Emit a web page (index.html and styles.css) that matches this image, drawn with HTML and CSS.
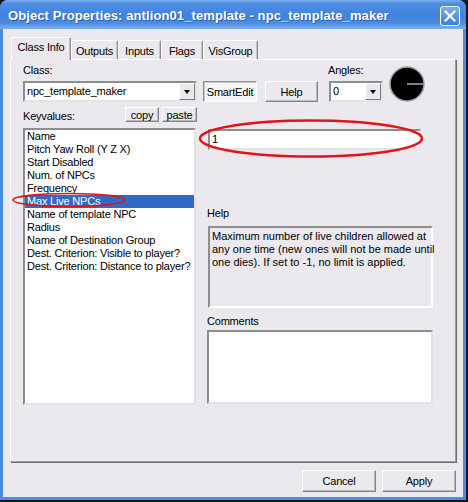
FILE: index.html
```html
<!DOCTYPE html>
<html lang="en">
<head>
    <meta charset="UTF-8">
    <title>Object Properties</title>
    <link rel="stylesheet" href="styles.css">
</head>
<body>
    <div class="window">
        <div class="titlebar">
            <span class="title">Object Properties: antlion01_template - npc_template_maker</span>
            <button class="close" type="button">
                <svg width="12" height="12" viewBox="0 0 12 12"><path d="M1.5 1.5 L10.5 10.5 M10.5 1.5 L1.5 10.5" stroke="#fff" stroke-width="2.2" stroke-linecap="square"/></svg>
            </button>
        </div>
        <div class="frame">
            <div class="tabs">
                <div class="tab active tab-class">Class Info</div>
                <div class="tab tab-outputs">Outputs</div>
                <div class="tab tab-inputs">Inputs</div>
                <div class="tab tab-flags">Flags</div>
                <div class="tab tab-vis">VisGroup</div>
            </div>
            <div class="panel">
                <div class="toprow">
                    <div class="field class-field">
                        <label>Class:</label>
                        <div class="combo"><span class="combo-text">npc_template_maker</span><span class="drop"></span></div>
                    </div>
                    <button class="btn smartedit" type="button">SmartEdit</button>
                    <button class="btn help-btn" type="button">Help</button>
                    <div class="field angles-field">
                        <label>Angles:</label>
                        <div class="combo"><span class="combo-text">0</span><span class="drop"></span></div>
                    </div>
                    <svg class="dial" width="36" height="36" viewBox="0 0 36 36">
                        <circle cx="18" cy="18" r="17" fill="#000" stroke="#a4a4a4" stroke-width="1.5"/>
                        <line x1="18" y1="18" x2="34" y2="18" stroke="#fff" stroke-width="1"/>
                    </svg>
                </div>

                <div class="kvrow">
                    <label>Keyvalues:</label>
                    <button class="btn small copy" type="button">copy</button>
                    <button class="btn small paste" type="button">paste</button>
                </div>

                <div class="main">
                    <ul class="keylist">
                        <li>Name</li>
                        <li>Pitch Yaw Roll (Y Z X)</li>
                        <li>Start Disabled</li>
                        <li>Num. of NPCs</li>
                        <li>Frequency</li>
                        <li class="selected">Max Live NPCs</li>
                        <li>Name of template NPC</li>
                        <li>Radius</li>
                        <li>Name of Destination Group</li>
                        <li>Dest. Criterion: Visible to player?</li>
                        <li>Dest. Criterion: Distance to player?</li>
                    </ul>
                    <div class="side">
                        <div class="value">1</div>
                        <div class="caption help-caption">Help</div>
                        <div class="helpbox">Maximum number of live children allowed at<br>any one time (new ones will not be made until<br>one dies). If set to -1, no limit is applied.</div>
                        <div class="caption comments-caption">Comments</div>
                        <div class="comments"></div>
                    </div>
                </div>
            </div>
            <div class="footer">
                <button class="btn wide" type="button">Cancel</button>
                <button class="btn wide" type="button">Apply</button>
            </div>
        </div>

        <!-- red markup rings drawn over the dialog -->
        <svg class="marks" width="466" height="500" viewBox="0 0 466 500">
            <ellipse cx="311" cy="138.5" rx="111" ry="18" fill="none" stroke="#e3121b" stroke-width="2.4"/>
            <ellipse cx="69" cy="200" rx="56" ry="6.5" fill="none" stroke="#e3121b" stroke-width="1.6"/>
        </svg>
    </div>
</body>
</html>
```

FILE: styles.css
```css
body {
    margin: 0;
    background: #10151f;
    font-family: "Liberation Sans", Arial, sans-serif;
    font-size: 11px;
    letter-spacing: -0.2px;
    color: #000;
}
button {
    font: inherit;
    letter-spacing: inherit;
    color: #000;
    padding: 0;
}
.window {
    position: relative;
    width: 466px;
    height: 500px;
    background: #4a8ce2;
    border-radius: 8px 8px 0 0;
    overflow: hidden;
}
.titlebar {
    height: 29px;
    display: flex;
    align-items: center;
    justify-content: space-between;
    padding: 0 6px 0 8px;
    background: linear-gradient(#7cb0ef 0%, #4d8ee2 12%, #3f83dc 55%, #4c8de1 80%, #7fb1ee 100%);
    box-sizing: border-box;
}
.title {
    color: #fff;
    font-weight: bold;
    font-size: 13px;
    letter-spacing: 0.1px;
    margin-top: 2px;
    text-shadow: 1px 1px 0 #2a5fb0;
}
.close {
    width: 20px;
    height: 20px;
    margin-top: 3px;
    border: 1px solid #fff;
    border-radius: 3px;
    background: linear-gradient(#79aef0, #3d7fdc);
    display: flex;
    align-items: center;
    justify-content: center;
}
.frame {
    margin: 0 3px;
    height: 468px;
    background: #ebe9ed;
    padding: 8px 0 0 7px;
    box-sizing: border-box;
}

/* tab strip */
.tabs {
    display: flex;
    align-items: flex-end;
    height: 22px;
    margin-left: 1px;
    position: relative;
    z-index: 1;
}
.tab {
    height: 19px;
    box-sizing: border-box;
    border: 1px solid #fff;
    border-right-color: #8a8a8a;
    border-bottom: none;
    border-radius: 2px 2px 0 0;
    box-shadow: inset -1px 0 #c4c4c4;
    text-align: center;
    line-height: 18px;
    padding-top: 1px;
}
.tab.active {
    height: 23px;
    margin-bottom: -1px;
    background: #ebe9ed;
    line-height: 19px;
    padding-top: 0;
}
.tab-class { width: 60px; }
.tab-outputs { width: 47px; }
.tab-inputs { width: 43px; }
.tab-flags { width: 42px; }
.tab-vis { width: 55px; }

.panel {
    width: 446px;
    height: 403px;
    box-sizing: border-box;
    border: 1px solid #fff;
    border-right-color: #9c9c9c;
    border-bottom-color: #9c9c9c;
    box-shadow: 1px 1px 0 #6f6f6f;
    padding: 4px 0 0 12px;
}
label, .caption {
    display: block;
    line-height: 13px;
}

/* class / angles row */
.toprow {
    display: flex;
    align-items: flex-end;
}
.combo {
    display: flex;
    height: 21px;
    box-sizing: border-box;
    background: #fff;
    border: 2px solid;
    border-color: #8e8e8e #e4e4e4 #e4e4e4 #8e8e8e;
    margin-top: 4px;
}
.combo-text {
    flex: 1;
    padding-left: 2px;
    line-height: 17px;
}
.drop {
    width: 16px;
    background: #ebe9ed;
    border: 1px solid;
    border-color: #fff #7c7c7c #7c7c7c #fff;
    box-sizing: border-box;
    position: relative;
}
.drop::after {
    content: "";
    position: absolute;
    left: 4px;
    top: 6px;
    border: 3.5px solid transparent;
    border-top: 4px solid #000;
    border-bottom: none;
}
.class-field { width: 174px; }
.btn {
    height: 21px;
    box-sizing: border-box;
    background: #ebe9ed;
    border: 1px solid;
    border-color: #fff #858585 #858585 #fff;
    box-shadow: inset -1px -1px #b9b9b9;
}
.smartedit {
    width: 54px;
    margin-left: 6px;
    background: #f5f4f6;
    border-color: #8e8e8e #fff #fff #8e8e8e;
    box-shadow: inset 1px 1px #c6c6c6;
}
.help-btn {
    width: 53px;
    margin-left: 8px;
}
.angles-field {
    margin-left: 10px;
}
.angles-field .combo {
    width: 54px;
    margin-left: 1px;
}
.dial {
    margin-left: 6px;
    display: block;
}

/* keyvalues header */
.kvrow {
    display: flex;
    align-items: flex-start;
    margin-top: 5px;
}
.kvrow label {
    width: 102px;
    margin-top: 3px;
}
.btn.small {
    height: 15px;
    line-height: 12px;
}
.copy { width: 34px; }
.paste { width: 35px; margin-left: 3px; }

/* list and detail column */
.main {
    display: flex;
    margin-top: 5px;
}
.keylist {
    list-style: none;
    margin: 0;
    padding: 0;
    width: 173px;
    height: 277px;
    box-sizing: border-box;
    background: #fff;
    border: 2px solid;
    border-color: #8e8e8e #e2e2e2 #e2e2e2 #8e8e8e;
}
.keylist li {
    height: 13px;
    line-height: 13px;
    padding-left: 2px;
    white-space: nowrap;
}
.keylist li.selected {
    background: #316ac5;
    color: #fff;
}
.side {
    margin-left: 11px;
}
.value {
    width: 213px;
    height: 21px;
    box-sizing: border-box;
    margin: 1px 0 0 1px;
    background: #fff;
    border: 2px solid;
    border-color: #8e8e8e #e4e4e4 #e4e4e4 #8e8e8e;
    padding-left: 2px;
    line-height: 17px;
}
.help-caption {
    margin-top: 57px;
}
.helpbox {
    width: 225px;
    height: 82px;
    box-sizing: border-box;
    margin: 6px 0 0 1px;
    border: 2px solid;
    border-color: #8e8e8e #fff #fff #8e8e8e;
    padding: 2px 0 0 2px;
    letter-spacing: 0;
    line-height: 13px;
    white-space: nowrap;
}
.comments-caption {
    margin-top: 7px;
}
.comments {
    width: 226px;
    height: 74px;
    box-sizing: border-box;
    margin-top: 2px;
    background: #fff;
    border: 2px solid;
    border-color: #8e8e8e #e2e2e2 #e2e2e2 #8e8e8e;
}

.footer {
    display: flex;
    justify-content: flex-end;
    gap: 6px;
    margin: 8px 7px 0 0;
}
.btn.wide {
    width: 74px;
    height: 22px;
}

.marks {
    position: absolute;
    left: 0;
    top: 0;
    pointer-events: none;
}
```
